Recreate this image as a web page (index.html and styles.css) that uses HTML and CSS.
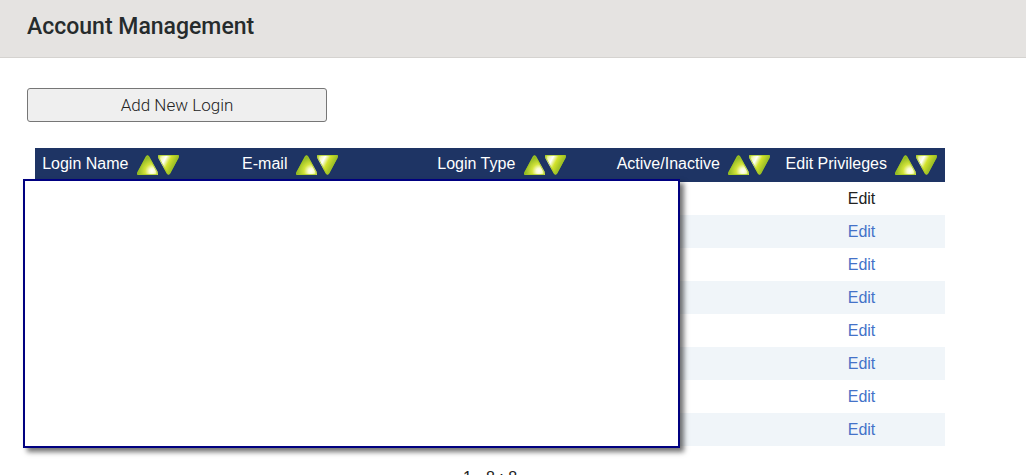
FILE: index.html
```html
<!DOCTYPE html>
<html lang="en">
<head>
    <meta charset="UTF-8">
    <title>Account Management</title>
    <link rel="stylesheet" href="styles.css">
</head>
<body>
<svg class="defs" aria-hidden="true">
    <defs>
        <radialGradient id="upShine" gradientUnits="userSpaceOnUse" cx="15" cy="16" r="14">
            <stop offset="0" stop-color="#ffffff"/>
            <stop offset="0.2" stop-color="#fafcd0"/>
            <stop offset="0.5" stop-color="#d3e43a"/>
            <stop offset="1" stop-color="#8fb726"/>
        </radialGradient>
        <linearGradient id="downShine" x1="0" y1="0" x2="1" y2="0.5">
            <stop offset="0" stop-color="#b5d422"/>
            <stop offset="0.2" stop-color="#f4f9b4"/>
            <stop offset="0.35" stop-color="#ffffff"/>
            <stop offset="0.55" stop-color="#d3e32c"/>
            <stop offset="1" stop-color="#76a329"/>
        </linearGradient>
        <symbol id="up" viewBox="0 0 21 20">
            <path d="M9 1Q10.500 -0.500 12 1L20.500 16.500Q21.500 20 20.500 20H0.500Q-0.500 19 0.500 17Z" fill="url(#upShine)"/>
            <path d="M9.500 1.500Q10.500 0.500 11.500 1.500L20 17V19.500H1Q0 19 1 17Z" fill="none" stroke="#a4c91c" stroke-opacity="0.7"/>
        </symbol>
        <symbol id="down" viewBox="0 0 21 20">
            <path d="M0.500 0H20.500Q21.500 1 20.500 3L12 19Q10.500 20.500 9 19L0.500 3.500Q-0.500 1 0.500 0Z" fill="url(#downShine)"/>
            <path d="M1 0.500H20Q20.500 1 20 3L11.500 18.500Q10.500 19.500 9.500 18.500L1 3Z" fill="none" stroke="#a4c91c" stroke-opacity="0.7"/>
        </symbol>
    </defs>
</svg>
<header class="page-header">
    <h1>Account Management</h1>
</header>
<main class="content">
    <button type="button" class="add-login">Add New Login</button>
    <div class="logins">
        <table>
            <thead>
            <tr>
                <th class="name">Login Name
                    <button type="button" class="sort" aria-label="Sort ascending"><svg><use href="#up"/></svg></button><button type="button" class="sort" aria-label="Sort descending"><svg><use href="#down"/></svg></button>
                </th>
                <th class="email">E-mail
                    <button type="button" class="sort" aria-label="Sort ascending"><svg><use href="#up"/></svg></button><button type="button" class="sort" aria-label="Sort descending"><svg><use href="#down"/></svg></button>
                </th>
                <th class="type">Login Type
                    <button type="button" class="sort" aria-label="Sort ascending"><svg><use href="#up"/></svg></button><button type="button" class="sort" aria-label="Sort descending"><svg><use href="#down"/></svg></button>
                </th>
                <th class="active">Active/Inactive
                    <button type="button" class="sort" aria-label="Sort ascending"><svg><use href="#up"/></svg></button><button type="button" class="sort" aria-label="Sort descending"><svg><use href="#down"/></svg></button>
                </th>
                <th class="edit">Edit Privileges
                    <button type="button" class="sort" aria-label="Sort ascending"><svg><use href="#up"/></svg></button><button type="button" class="sort" aria-label="Sort descending"><svg><use href="#down"/></svg></button>
                </th>
            </tr>
            </thead>
            <tbody>
            <tr><td></td><td></td><td></td><td></td><td><a href="#" class="current">Edit</a></td></tr>
            <tr><td></td><td></td><td></td><td></td><td><a href="#">Edit</a></td></tr>
            <tr><td></td><td></td><td></td><td></td><td><a href="#">Edit</a></td></tr>
            <tr><td></td><td></td><td></td><td></td><td><a href="#">Edit</a></td></tr>
            <tr><td></td><td></td><td></td><td></td><td><a href="#">Edit</a></td></tr>
            <tr><td></td><td></td><td></td><td></td><td><a href="#">Edit</a></td></tr>
            <tr><td></td><td></td><td></td><td></td><td><a href="#">Edit</a></td></tr>
            <tr><td></td><td></td><td></td><td></td><td><a href="#">Edit</a></td></tr>
            </tbody>
        </table>
        <div class="cover"></div>
    </div>
    <p class="pager">1 - 8 : 8</p>
</main>
</body>
</html>
```
FILE: styles.css
```css
*{
    box-sizing: border-box;
    margin: 0;
    padding: 0;
}
body{
    font: 16px/20px "Liberation Sans", Arial, sans-serif;
    color: #222;
    background: white;
}
.defs{
    position: absolute;
    width: 0;
    height: 0;
}
.page-header{
    padding: 13px 27px 16px;
    background: #e5e3e1;
    border-bottom: 1px solid #d5d3d0;
}
.page-header h1{
    font: 500 23px/28px Roboto, sans-serif;
    color: #262b2c;
}
.content{
    padding: 30px 73px 20px 27px;
}
.add-login{
    display: block;
    width: 300px;
    height: 34px;
    font: 300 17px/24px Roboto, sans-serif;
    color: #222;
    background: #efefef;
    border: 1px solid #767676;
    border-radius: 3px;
}
.logins{
    position: relative;
    margin: 26px 8px 0;
}
table{
    width: 100%;
    table-layout: fixed;
    border-collapse: collapse;
    text-align: center;
}
th{
    height: 34px;
    padding-bottom: 2px;
    font-weight: normal;
    color: white;
    background: #1e3464;
    white-space: nowrap;
}
.name{
    width: 151px;
}
.email{
    width: 208px;
}
.type{
    width: 215px;
}
.active{
    width: 169px;
}
td{
    height: 33px;
}
tbody tr:nth-child(even){
    background: #f0f5f9;
}
a{
    color: #4472c8;
    text-decoration: none;
}
a.current{
    color: #222;
}
.sort{
    width: 21px;
    height: 20px;
    background: none;
    border: 0;
    vertical-align: -6px;
    cursor: pointer;
}
.sort:first-child{
    margin-left: 4px;
}
.sort svg{
    display: block;
    width: 21px;
    height: 20px;
}
.cover{
    position: absolute;
    top: 31px;
    right: 265px;
    bottom: -2px;
    left: -12px;
    background: white;
    border: 2px solid #000080;
    box-shadow: 4px 4px 5px rgba(0, 0, 0, 0.55);
}
.pager{
    margin-top: 22px;
    text-align: center;
}
```
